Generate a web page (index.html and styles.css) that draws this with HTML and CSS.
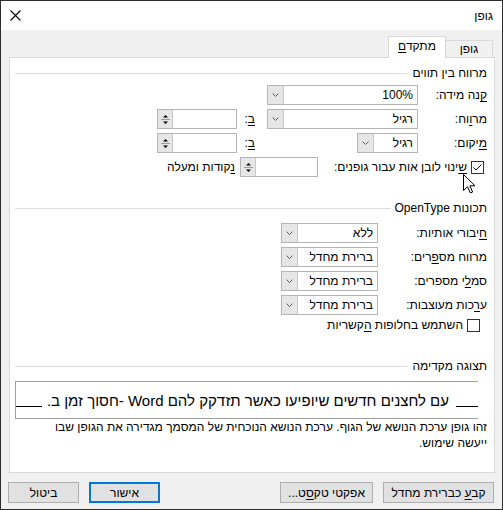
FILE: index.html
```html
<!DOCTYPE html>
<html lang="he" dir="rtl">
<head>
<meta charset="utf-8">
<title>גופן</title>
<link rel="stylesheet" href="styles.css">
</head>
<body>
<div class="window">
  <div class="titlebar">
    <span class="title">גופן</span>
    <svg class="close" width="11" height="11" viewBox="0 0 11 11"><path d="M0.5 0.5 L10.5 10.5 M10.5 0.5 L0.5 10.5" stroke="#000" stroke-width="1.1" fill="none"/></svg>
  </div>

  <div class="tabs">
    <div class="tab">גופן</div>
    <div class="tab active">מתקד<u>ם</u></div>
  </div>

  <div class="panel">
    <div class="section-head"><span>מרווח בין תווים</span><span class="rule"></span></div>
    <div class="spacing">
      <span class="lbl"><u>ק</u>נה מידה:</span>
      <div class="combo"><span class="val">100%</span><span class="drop"><svg width="7" height="4" viewBox="0 0 7 4"><polyline points="0.5,0.5 3.5,3.5 6.5,0.5" fill="none" stroke="#606060"/></svg></span></div>
      <span></span><span></span>

      <span class="lbl">מר<u>ו</u>וח:</span>
      <div class="combo"><span class="val">רגיל</span><span class="drop"><svg width="7" height="4" viewBox="0 0 7 4"><polyline points="0.5,0.5 3.5,3.5 6.5,0.5" fill="none" stroke="#606060"/></svg></span></div>
      <span class="b-lbl"><u>ב</u>:</span>
      <div class="spin"><span class="field"></span><span class="arrows"><svg width="13" height="16" viewBox="0 0 13 16"><path d="M4 6.5 L6.5 4 L9 6.5 Z" fill="#000"/><line x1="2" y1="8.5" x2="11" y2="8.5" stroke="#9a9a9a"/><path d="M4 10.5 L6.5 13 L9 10.5 Z" fill="#000"/></svg></span></div>

      <span class="lbl"><u>מ</u>יקום:</span>
      <div class="combo short"><span class="val">רגיל</span><span class="drop"><svg width="7" height="4" viewBox="0 0 7 4"><polyline points="0.5,0.5 3.5,3.5 6.5,0.5" fill="none" stroke="#606060"/></svg></span></div>
      <span class="b-lbl"><u>ב</u>:</span>
      <div class="spin"><span class="field"></span><span class="arrows"><svg width="13" height="16" viewBox="0 0 13 16"><path d="M4 6.5 L6.5 4 L9 6.5 Z" fill="#000"/><line x1="2" y1="8.5" x2="11" y2="8.5" stroke="#9a9a9a"/><path d="M4 10.5 L6.5 13 L9 10.5 Z" fill="#000"/></svg></span></div>

      <div class="kern">
        <span class="chk-wrap">
          <svg class="chk" width="13" height="13" viewBox="0 0 13 13"><rect x="0.5" y="0.5" width="12" height="12" fill="#fff" stroke="#333"/><polyline points="2.5,6.5 5,9 10.5,3.5" fill="none" stroke="#000" stroke-width="1"/></svg>
          <span><u>ש</u>ינוי לובן אות עבור גופנים:</span>
        </span>
        <div class="spin kspin"><span class="field"></span><span class="arrows"><svg width="13" height="16" viewBox="0 0 13 16"><path d="M4 6.5 L6.5 4 L9 6.5 Z" fill="#000"/><line x1="2" y1="8.5" x2="11" y2="8.5" stroke="#9a9a9a"/><path d="M4 10.5 L6.5 13 L9 10.5 Z" fill="#000"/></svg></span></div>
        <span class="pts"><u>נ</u>קודות ומעלה</span>
      </div>
    </div>

    <div class="section-head ot-head"><span>תכונות OpenType</span><span class="rule"></span></div>
    <div class="opentype">
      <span class="lbl"><u>ח</u>יבורי אותיות:</span>
      <div class="combo"><span class="val">ללא</span><span class="drop"><svg width="7" height="4" viewBox="0 0 7 4"><polyline points="0.5,0.5 3.5,3.5 6.5,0.5" fill="none" stroke="#606060"/></svg></span></div>
      <span class="lbl">מרווח מס<u>פ</u>רים:</span>
      <div class="combo"><span class="val">ברירת מחדל</span><span class="drop"><svg width="7" height="4" viewBox="0 0 7 4"><polyline points="0.5,0.5 3.5,3.5 6.5,0.5" fill="none" stroke="#606060"/></svg></span></div>
      <span class="lbl">סמ<u>ל</u>י מספרים:</span>
      <div class="combo"><span class="val">ברירת מחדל</span><span class="drop"><svg width="7" height="4" viewBox="0 0 7 4"><polyline points="0.5,0.5 3.5,3.5 6.5,0.5" fill="none" stroke="#606060"/></svg></span></div>
      <span class="lbl">ע<u>ר</u>כות מעוצבות:</span>
      <div class="combo"><span class="val">ברירת מחדל</span><span class="drop"><svg width="7" height="4" viewBox="0 0 7 4"><polyline points="0.5,0.5 3.5,3.5 6.5,0.5" fill="none" stroke="#606060"/></svg></span></div>
    </div>
    <div class="ctx">
      <svg class="chk" width="13" height="13" viewBox="0 0 13 13"><rect x="0.5" y="0.5" width="12" height="12" fill="#fff" stroke="#333"/></svg>
      <span>השתמש בחלופות <u>ה</u>קשריות</span>
    </div>

    <div class="section-head pv-head"><span>תצוגה מקדימה</span><span class="rule"></span></div>
    <div class="preview">
      <span class="ul ul-r"></span><span class="ptext">עם לחצנים חדשים שיופיעו כאשר תזדקק להם Word -חסוך זמן ב.</span><span class="ul ul-l"></span>
    </div>
    <div class="desc">זהו גופן ערכת הנושא של הגוף. ערכת הנושא הנוכחית של המסמך מגדירה את הגופן שבו<br>ייעשה שימוש.</div>
  </div>

  <div class="buttons">
    <div class="btn w-default"><span>קב<u>ע</u> כברירת מחדל</span></div>
    <div class="btn w-effects"><span>אפקטי טק<u>ס</u>ט...</span></div>
    <div class="btn w-ok primary"><span>אישור</span></div>
    <div class="btn w-cancel"><span>ביטול</span></div>
  </div>

  <svg class="cursor" width="13" height="20" viewBox="0 0 13 20"><path d="M0.5 0.5 L0.5 16.5 L4.5 12.7 L7.3 19 L9.6 18 L6.9 11.8 L12 11.8 Z" fill="#fff" stroke="#000" stroke-width="1" stroke-linejoin="miter"/></svg>
</div>
</body>
</html>
```

FILE: styles.css
```css
* { box-sizing: border-box; }
html, body { margin: 0; padding: 0; }
body {
  width: 503px;
  height: 510px;
  overflow: hidden;
  background: #f0f0f0;
  font-family: "Liberation Sans", "DejaVu Sans", sans-serif;
  font-size: 12px;
  color: #000;
}
u { text-decoration: underline; text-underline-offset: 2px; }

.window {
  position: relative;
  width: 503px;
  height: 510px;
  border: 1px solid #2e2e2e;
  background: #f0f0f0;
  display: flex;
  flex-direction: column;
}

.titlebar {
  height: 29px;
  flex: none;
  background: #fff;
  display: flex;
  align-items: center;
  justify-content: space-between;
  padding: 0 9px 0 9px;
}
.title { font-size: 12px; }
.close { display: block; }

.tabs {
  flex: none;
  display: flex;
  align-items: flex-end;
  height: 22px;
  margin-top: 6px;
  padding-right: 9px;
}
.tab {
  width: 48px;
  height: 18px;
  border: 1px solid #d9d9d9;
  border-bottom: 0;
  background: #f0f0f0;
  text-align: center;
  line-height: 17px;
}
.tab.active {
  position: relative;
  z-index: 1;
  width: 58px;
  height: 22px;
  background: #fff;
  line-height: 19px;
  margin-right: -1px;
}

.panel {
  flex: none;
  margin: -1px 7px 0 8px;
  height: 416px;
  background: #fff;
  border: 1px solid #d9d9d9;
  padding: 7px 7px 0 5px;
}

.section-head {
  display: flex;
  align-items: center;
  height: 16px;
  line-height: 16px;
  white-space: nowrap;
}
.section-head .rule {
  flex: 1;
  border-top: 1px solid #dcdcdc;
  margin-right: 4px;
}

.spacing {
  display: grid;
  grid-template-columns: 69px 151px 30px 80px;
  grid-auto-rows: 20px;
  row-gap: 4px;
  margin-top: 4px;
  align-items: center;
}
.lbl { white-space: nowrap; }
.b-lbl { padding-right: 12px; white-space: nowrap; }

.combo {
  display: flex;
  height: 20px;
  border: 1px solid #b4b4b4;
  background: #fff;
}
.combo.short { width: 61px; }
.combo .val {
  flex: 1;
  padding-right: 4px;
  line-height: 18px;
  white-space: nowrap;
  overflow: hidden;
}
.combo .drop {
  flex: none;
  width: 16px;
  background: #e6e6e6;
  border-right: 1px solid #c8c8c8;
  display: flex;
  align-items: center;
  justify-content: center;
}
.combo .drop svg { display: block; }

.spin {
  display: flex;
  height: 20px;
  border: 1px solid #b4b4b4;
  background: #fff;
}
.spin .field { flex: 1; }
.spin .arrows {
  flex: none;
  width: 15px;
  background: #e6e6e6;
  border-right: 1px solid #c8c8c8;
  display: flex;
  align-items: center;
  justify-content: center;
}
.spin .arrows svg { display: block; }

.kern {
  grid-column: 1 / -1;
  display: flex;
  align-items: center;
  height: 20px;
  padding-right: 3px;
}
.chk-wrap {
  width: 166px;
  display: flex;
  align-items: center;
  gap: 4px;
  white-space: nowrap;
}
.chk { display: block; flex: none; }
.kspin { width: 78px; }
.pts { margin-right: 5px; white-space: nowrap; }

.ot-head { margin-top: 23px; }
.opentype {
  display: grid;
  grid-template-columns: 109px 97px;
  grid-auto-rows: 20px;
  row-gap: 4px;
  margin-top: 7px;
  align-items: center;
}

.ctx {
  display: flex;
  align-items: center;
  gap: 4px;
  height: 14px;
  margin-top: 3px;
  padding-right: 7px;
  white-space: nowrap;
}

.pv-head { margin-top: 26px; }
.preview {
  height: 38px;
  margin-top: 7px;
  margin-right: 9px;
  border: 1px solid #a0a0a0;
  border-right: 0;
  display: flex;
  align-items: center;
  overflow: hidden;
  white-space: nowrap;
  font-size: 15px;
}
.ul {
  flex: none;
  height: 1px;
  background: #000;
  margin-top: 12px;
}
.ul-r { width: 22px; }
.ul-l { width: 40px; }
.ptext { margin: 0 7px 0 5px; }

.desc {
  line-height: 16px;
  white-space: nowrap;
}

.buttons {
  flex: none;
  display: flex;
  gap: 10px;
  height: 21px;
  margin-top: 9px;
  padding: 0 8px 0 7px;
}
.btn {
  height: 21px;
  border: 1px solid #adadad;
  background: #e1e1e1;
  display: flex;
  align-items: center;
  justify-content: center;
  white-space: nowrap;
}
.w-default { width: 111px; }
.w-effects { width: 93px; }
.w-ok { width: 71px; margin-right: auto; }
.w-cancel { width: 71px; }
.btn.primary {
  border-color: #0078d7;
  box-shadow: inset 0 0 0 1px #0078d7;
}

.cursor {
  position: absolute;
  left: 462px;
  top: 173px;
  display: block;
}
```
